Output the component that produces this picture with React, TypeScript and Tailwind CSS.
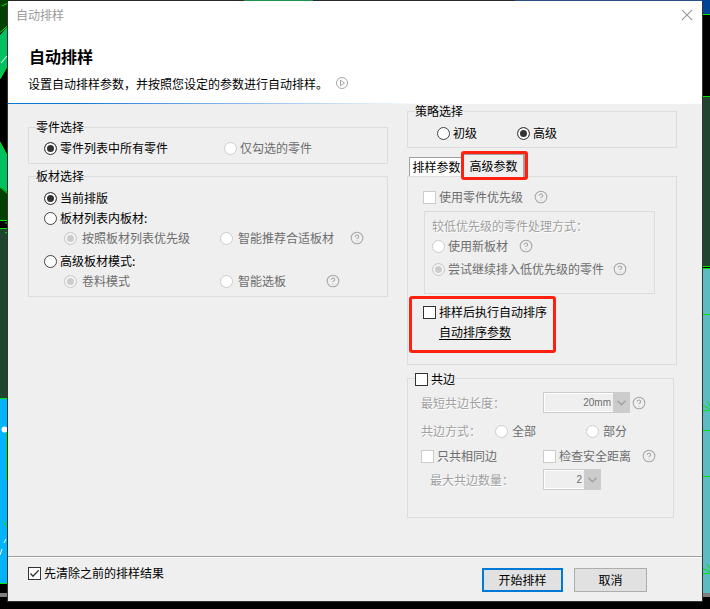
import { useState } from 'react';
import type { ReactNode } from 'react';
import { CircleHelp } from 'lucide-react';

interface ChoiceProps {
  children: ReactNode;
  disabled?: boolean;
  defaultChecked?: boolean;
  name?: string;
  gap?: string;
}

function Radio({ children, disabled, defaultChecked, name, gap = 'gap-[3px]' }: ChoiceProps) {
  return (
    <label className={`flex h-4 items-center whitespace-nowrap ${gap} ${disabled ? 'text-[#6d6d6d]' : 'text-black'}`}>
      <input
        type="radio"
        name={name}
        disabled={disabled}
        defaultChecked={defaultChecked}
        className="size-[13px] shrink-0 appearance-none rounded-full border border-[#444] bg-white checked:bg-[#333] checked:shadow-[inset_0_0_0_2px_#fff] disabled:border-[#ccc] disabled:checked:bg-[#ccc] disabled:checked:shadow-[inset_0_0_0_2px_#f6f6f6]"
      />
      {children}
    </label>
  );
}

function Checkbox({ children, disabled, defaultChecked }: ChoiceProps) {
  return (
    <label className={`flex h-4 items-center gap-[3px] whitespace-nowrap ${disabled ? 'text-[#6d6d6d]' : 'text-black'}`}>
      <span className="grid">
        <input
          type="checkbox"
          disabled={disabled}
          defaultChecked={defaultChecked}
          className="peer col-start-1 row-start-1 size-[13px] appearance-none border border-[#333] bg-white disabled:border-[#ccc]"
        />
        <svg
          viewBox="0 0 13 13"
          className="pointer-events-none invisible col-start-1 row-start-1 size-[13px] peer-checked:visible"
          fill="none"
          stroke="#333"
          strokeWidth="1.3"
        >
          <path d="M2.5 6.5 5 9.2 10.7 3.2" />
        </svg>
      </span>
      {children}
    </label>
  );
}

function Help() {
  return (
    <button type="button" aria-label="帮助" className="shrink-0">
      <CircleHelp className="size-[14px] text-[#a6a6a6]" strokeWidth={1.8} />
    </button>
  );
}

function Combo({ id, value, className }: { id: string; value: string; className: string }) {
  return (
    <span className={`grid h-[21px] ${className}`}>
      <select
        id={id}
        disabled
        className="col-start-1 row-start-1 appearance-none border border-[#ccc] bg-[#efefef] pr-[18px] text-right font-['Liberation_Sans','Noto_Sans_CJK_SC',sans-serif] text-[10px] text-[#6d6d6d] opacity-100 shadow-[inset_0_0_0_1px_#fff] [text-align-last:right]"
      >
        <option>{value}</option>
      </select>
      <span className="pointer-events-none z-10 col-start-1 row-start-1 flex w-[17px] items-center justify-center justify-self-end bg-[#ccc]">
        <svg viewBox="0 0 9 6" className="h-[6px] w-[9px]" fill="none" stroke="#a0a0a0" strokeWidth="1.3">
          <path d="M.5 .8 4.5 4.8 8.5 .8" />
        </svg>
      </span>
    </span>
  );
}

const legend = 'ml-[7px] leading-[14px]';
const etched = 'text-[#a0a0a0] [text-shadow:1px_1px_0_#fff]';

// Strips of the drawing canvas left visible around the dialog
function Canvas() {
  return (
    <div aria-hidden="true" className="absolute inset-0 flex justify-between overflow-hidden bg-black">
      <svg width="8" height="609" viewBox="0 0 8 609">
        <path d="M0 0H8V27L0 33Z" fill="#004000" />
        <path d="M8 26V65L0 79V35Z" fill="#00c060" />
        <path d="M0 142 8 157V193L0 187Z" fill="#00c060" />
        <path d="M0 187 8 193V220H0Z" fill="#004000" />
        <path d="M0 229H8V398H0Z" fill="#1f4530" />
        <path d="M0 398H8V584H0Z" fill="#00b4ff" />
        <path d="M0 593H8V597H0Z" fill="#808080" />
        <path
          d="M2 6 8 3M0 32.500 8 25.500M0 79 8 65M0 142 8 157M0 187 8 194M0 220.500H8M0 228.500H8M5 223H8M5 233 8 232M0 398.500H8M6.500 432V480M3 521 8 528M0 583.500H8"
          fill="none"
          stroke="#00e600"
        />
        <path d="M1 63 7 56M4 543 6 539M0 555 2 549" fill="none" stroke="#fff" />
        <circle cx="4.500" cy="429.500" r="3" fill="#fff" />
      </svg>
      <div className="flex h-px flex-1">
        <div className="w-[34%] bg-[#2a2a2a]" />
        <div className="w-[10%] bg-[#1e9050]" />
        <div className="w-[29%] bg-[#2a2a2a]" />
        <div className="flex-1 bg-[#2a4f80]" />
      </div>
      <svg width="8" height="609" viewBox="0 0 8 609">
        <path d="M0 0H8V14H0Z" fill="#004499" />
        <path d="M0 97H8V266H0Z" fill="#1f4530" />
        <path d="M0 269H8V593H0Z" fill="#5cbcc4" />
        <path d="M0 593H8V597H0Z" fill="#808080" />
        <path
          d="M0 14.500H8M0 96.500H8M0 266.500H8M0 268.500H8M0 314.500H8M0 430.500H8M0 476.500H8M0 405 8 409M1 411 8 410M5 401 8 406M0 568 8 572M1 574 8 573M5 564 8 569"
          fill="none"
          stroke="#00e600"
        />
      </svg>
    </div>
  );
}

export default function App() {
  const [tab, setTab] = useState<'basic' | 'advanced'>('advanced');

  return (
    <div className="relative flex min-h-screen flex-col px-2 pt-px pb-2 font-['Noto_Sans_CJK_SC',sans-serif] text-[12px] leading-4 text-black">
      <Canvas />

      <div
        role="dialog"
        aria-label="自动排样"
        className="relative flex flex-1 flex-col bg-[#efefef] shadow-[1px_1px_0_#333,-1px_1px_0_#333]"
      >
        <header className="bg-white">
          <div className="flex h-7 items-center justify-between pr-[9px] pl-2 text-[#999]">
            <span>自动排样</span>
            <button type="button" aria-label="关闭">
              <svg viewBox="0 0 12 12" className="size-3" stroke="#999" strokeWidth="1.1">
                <path d="M.8 .8 11.200 11.200M11.200 .8 .8 11.200" />
              </svg>
            </button>
          </div>
          <div className="px-5 pt-[15px] pb-[11px]">
            <h1 className="pl-px text-[16px] leading-6 font-bold">自动排样</h1>
            <div className="mt-2 flex items-center gap-[7px]">
              <p>设置自动排样参数，并按照您设定的参数进行自动排样。</p>
              <button type="button" aria-label="播放" className="self-start">
                <svg viewBox="0 0 14 14" className="size-[14px]" fill="none" stroke="#a6a6a6">
                  <circle cx="7" cy="7" r="5.500" />
                  <path d="M5.500 4.200V9.800L9.500 7Z" />
                </svg>
              </button>
            </div>
          </div>
          <div className="h-px bg-linear-to-r from-[#0078d7] from-10% to-white to-60%" />
        </header>

        <main className="grid flex-1 grid-cols-[4fr_3fr] items-start gap-x-[19px] pr-[25px] pb-9 pl-5">
          <div className="flex flex-col gap-[5px] pt-4">
            <fieldset className="border border-[#dcdcdc]">
              <legend className={legend}>零件选择</legend>
              <div className="grid grid-cols-[180px_auto] pt-[6px] pb-[7px] pl-[15px]">
                <Radio name="parts" defaultChecked>零件列表中所有零件</Radio>
                <Radio name="parts" disabled>仅勾选的零件</Radio>
              </div>
            </fieldset>

            <fieldset className="border border-[#dcdcdc]">
              <legend className={legend}>板材选择</legend>
              <div className="flex flex-col gap-[7px] py-[7px] pl-[15px]">
                <div className="flex flex-col gap-1">
                  <Radio name="sheet" defaultChecked>当前排版</Radio>
                  <Radio name="sheet">板材列表内板材:</Radio>
                  <div className="flex h-4 items-center pl-5">
                    <div className="w-[156px]">
                      <Radio name="sheetList" disabled defaultChecked gap="gap-[5px]">按照板材列表优先级</Radio>
                    </div>
                    <div className="w-[130px]">
                      <Radio name="sheetList" disabled gap="gap-[5px]">智能推荐合适板材</Radio>
                    </div>
                    <Help />
                  </div>
                </div>
                <div className="flex flex-col gap-1">
                  <Radio name="sheet">高级板材模式:</Radio>
                  <div className="flex h-4 items-center pl-5">
                    <div className="w-[156px]">
                      <Radio name="sheetMode" disabled defaultChecked gap="gap-[5px]">卷料模式</Radio>
                    </div>
                    <div className="w-[106px]">
                      <Radio name="sheetMode" disabled gap="gap-[5px]">智能选板</Radio>
                    </div>
                    <Help />
                  </div>
                </div>
              </div>
            </fieldset>
          </div>

          <div className="flex flex-col">
            <fieldset className="border border-[#dcdcdc]">
              <legend className={legend}>策略选择</legend>
              <div className="grid grid-cols-[80px_auto] pt-[7px] pb-[6px] pl-[29px]">
                <Radio name="strategy">初级</Radio>
                <Radio name="strategy" defaultChecked>高级</Radio>
              </div>
            </fieldset>

            <div role="tablist" className="relative z-10 mt-[3px] -mb-1 flex h-[29px] items-start pl-[2px]">
              <button
                type="button"
                role="tab"
                aria-selected={tab === 'basic'}
                onClick={() => setTab('basic')}
                className="mt-[6px] h-[19px] w-[52px] border-t border-l border-[#a0a0a0] bg-white pl-[2px] text-center whitespace-nowrap"
              >
                排样参数
              </button>
              <div className="rounded-[3px] border-3 border-[#ff2010] bg-[#efefef]">
                <button
                  type="button"
                  role="tab"
                  aria-selected={tab === 'advanced'}
                  onClick={() => setTab('advanced')}
                  className="block h-[23px] w-[61px] border-t border-r-2 border-[#a0a0a0] text-center whitespace-nowrap"
                >
                  高级参数
                </button>
              </div>
            </div>

            <div role="tabpanel" className="border border-[#dcdcdc] pt-3 pb-[11px]">
              <div className="flex items-center gap-[11px] pl-[15px]">
                <Checkbox disabled>使用零件优先级</Checkbox>
                <Help />
              </div>

              <div className="mt-[6px] mr-[21px] ml-4 border border-[#dcdcdc] pt-[6px] pb-4 pl-[7px]">
                <div className={etched}>较低优先级的零件处理方式：</div>
                <div className="mt-1 flex items-center gap-[11px]">
                  <Radio name="lowPriority" disabled>使用新板材</Radio>
                  <Help />
                </div>
                <div className="mt-[7px] flex items-center gap-[9px]">
                  <Radio name="lowPriority" disabled defaultChecked>尝试继续排入低优先级的零件</Radio>
                  <Help />
                </div>
              </div>

              <div className="mt-[2px] ml-px flex w-[147px] flex-col gap-1 rounded-[3px] border-3 border-[#ff2010] pt-[5px] pb-[10px] pl-[11px]">
                <Checkbox>排样后执行自动排序</Checkbox>
                <a href="#sort" className="ml-4 h-4 self-start underline underline-offset-2">自动排序参数</a>
              </div>
            </div>

            <fieldset className="mt-[6px] mr-[3px] border border-[#dcdcdc]">
              <legend className={legend}>
                <span className="block h-[14px]">
                  <Checkbox>共边</Checkbox>
                </span>
              </legend>
              <div className="pt-[7px] pb-[27px] pl-[13px]">
                <div className="flex items-center">
                  <label htmlFor="minLength" className={`w-[122px] ${etched}`}>最短共边长度：</label>
                  <Combo id="minLength" value="20mm" className="mr-[2px] w-[87px]" />
                  <Help />
                </div>
                <div className="mt-[10px] flex items-center">
                  <span className={`w-[74px] ${etched}`}>共边方式：</span>
                  <div className="w-[91px]">
                    <Radio name="edge" disabled gap="gap-1">全部</Radio>
                  </div>
                  <Radio name="edge" disabled gap="gap-1">部分</Radio>
                </div>
                <div className="mt-[9px] flex items-center">
                  <div className="w-[122px]">
                    <Checkbox disabled>只共相同边</Checkbox>
                  </div>
                  <div className="w-[99px]">
                    <Checkbox disabled>检查安全距离</Checkbox>
                  </div>
                  <Help />
                </div>
                <div className="mt-[5px] flex items-center">
                  <label htmlFor="maxCount" className={`w-[122px] pl-[9px] ${etched}`}>最大共边数量：</label>
                  <Combo id="maxCount" value="2" className="w-[58px]" />
                </div>
              </div>
            </fieldset>
          </div>
        </main>

        <footer className="flex items-start justify-between border-t border-[#a0a0a0] pr-[55px] pb-[9px] pl-5 shadow-[inset_0_1px_0_#fff]">
          <div className="pt-2">
            <Checkbox defaultChecked>先清除之前的排样结果</Checkbox>
          </div>
          <div className="flex gap-[11px] pt-[11px]">
            <button type="button" className="h-6 w-[81px] border-2 border-[#0078d7] bg-[#e1e1e1]">开始排样</button>
            <button type="button" className="h-6 w-[73px] border border-[#adadad] bg-[#e1e1e1]">取消</button>
          </div>
        </footer>
      </div>
    </div>
  );
}
